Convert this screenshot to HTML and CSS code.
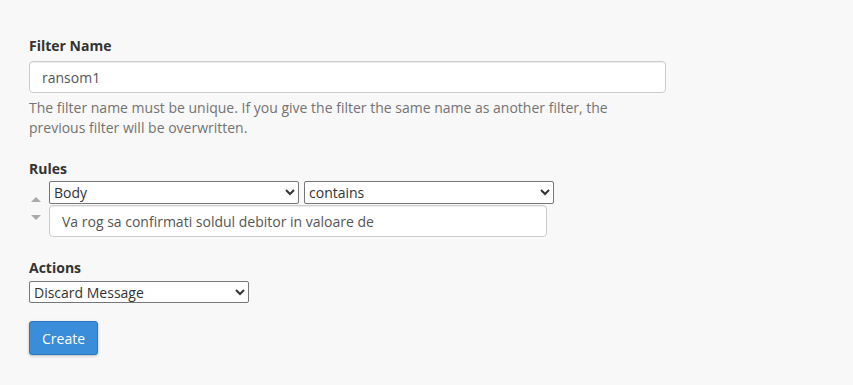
FILE: index.html
```html
<!DOCTYPE html>
<html lang="en">
<head>
    <meta charset="UTF-8">
    <meta name="viewport" content="width=device-width, initial-scale=1.0">
    <title>Create a New Filter</title>
    <link rel="stylesheet" href="styles.css">
</head>
<body>

    <form class="filter-form">
        <div class="form-group">
            <label for="filtername">Filter Name</label>
            <input type="text" id="filtername" class="text-field name-field" value="ransom1">
            <div class="help-text">The filter name must be unique. If you give the filter the same name as another filter, the previous filter will be overwritten.</div>
        </div>

        <div class="form-group">
            <label>Rules</label>
            <div class="rule">
                <div class="rule-arrows">
                    <span class="arrow arrow-up"></span>
                    <span class="arrow arrow-down"></span>
                </div>
                <div class="rule-fields">
                    <div class="rule-selects">
                        <select class="rule-select">
                            <option selected>Body</option>
                            <option>From</option>
                            <option>Subject</option>
                            <option>To</option>
                        </select>
                        <select class="rule-select">
                            <option selected>contains</option>
                            <option>matches regex</option>
                            <option>does not contain</option>
                            <option>equals</option>
                        </select>
                    </div>
                    <input type="text" class="text-field rule-value" value="Va rog sa confirmati soldul debitor in valoare de">
                </div>
            </div>
        </div>

        <div class="form-group">
            <label>Actions</label>
            <select class="action-select">
                <option selected>Discard Message</option>
                <option>Redirect to Email</option>
                <option>Fail With Message</option>
                <option>Stop Processing Rules</option>
            </select>
        </div>

        <button type="button" class="create-btn">Create</button>
    </form>

</body>
</html>
```

FILE: styles.css
```css
body {
    font-family: "Open Sans", "Liberation Sans", sans-serif;
    font-size: 14px;
    line-height: 20px;
    color: #333;
    background-color: #f8f8f8;
    margin: 0;
}

.filter-form {
    padding: 36px 29px 20px;
}

.form-group {
    margin-bottom: 21px;
}

.form-group label {
    display: block;
    font-weight: bold;
    margin-bottom: 5px;
}

.text-field {
    display: block;
    height: 32px;
    padding: 6px 12px;
    font-family: inherit;
    font-size: 14px;
    color: #555;
    background-color: #fff;
    border: 1px solid #ccc;
    border-radius: 4px;
    box-sizing: border-box;
    box-shadow: inset 0 1px 1px rgba(0, 0, 0, 0.075);
}

.name-field {
    width: 637px;
}

.help-text {
    margin-top: 5px;
    width: 637px;
    color: #737373;
}

/* Rules: reorder arrows + selects + value */
.rule {
    display: flex;
    margin-top: -3px;
}

.rule-arrows {
    width: 20px;
    display: flex;
    flex-direction: column;
    padding-top: 16px;
    box-sizing: border-box;
}

.arrow {
    width: 0;
    height: 0;
    margin-left: 2px;
    border-left: 5px solid transparent;
    border-right: 5px solid transparent;
}

.arrow-up {
    border-bottom: 5px solid #aaa;
}

.arrow-down {
    margin-top: 13px;
    border-top: 5px solid #aaa;
}

.rule-selects {
    display: flex;
    gap: 5px;
    margin-bottom: 2px;
}

.rule-select,
.action-select {
    height: 23px;
    font-family: inherit;
    font-size: 14px;
    color: #333;
    background-color: #fff;
    border: 1px solid #767676;
    border-radius: 2px;
    padding: 0;
}

.rule-select {
    width: 250px;
}

.rule-value {
    width: 498px;
    margin-top: -1px;
}

.action-select {
    width: 220px;
    height: 22px;
    margin-top: -3px;
}

.create-btn {
    margin-top: -3px;
    height: 34px;
    padding: 6px 12px;
    font-family: inherit;
    font-size: 14px;
    color: #fff;
    background-color: #3a8dd8;
    border: 1px solid #2b77c0;
    border-radius: 3px;
    box-shadow: 0 1px 3px rgba(0, 0, 0, 0.25);
    cursor: pointer;
}

.create-btn:hover {
    background-color: #2b77c0;
}
```
